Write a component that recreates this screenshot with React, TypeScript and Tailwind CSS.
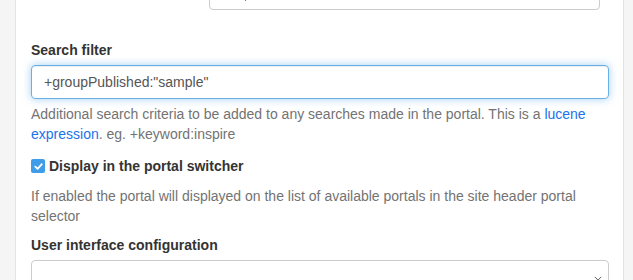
export default function App() {
  return (
    <div className="flex h-[280px] w-[633px] overflow-hidden bg-[#f5f5f5] font-['Liberation_Sans',Arial,sans-serif] text-[14px] text-[#333]">
      <div className="ml-[15px] w-[609px] shrink-0 border-x border-[#e3e3e3] bg-white px-[15px]">
        {/* previous field, cut off at the top */}
        <div className="-mt-[24px] flex justify-end pr-[8px]">
          <div className="relative h-[34px] w-[391px] rounded-[4px] border border-[#ccc] bg-white">
            <span className="absolute left-[35px] top-[20px] h-[4px] w-px bg-[#8a6a9a]" />
          </div>
        </div>

        <div className="mt-[30px]">
          <label className="block text-[14px] font-bold leading-[20px] text-[#333]">Search filter</label>
          <div className="mt-[5px] flex h-[34px] w-[578px] items-center rounded-[4px] border border-[#66afe9] px-[12px] text-[14px] text-[#555] shadow-[inset_0_1px_1px_rgba(0,0,0,0.075),0_0_8px_rgba(102,175,233,0.6)]">
            +groupPublished:"sample"
          </div>
          <p className="mt-[5px] w-[578px] text-[14px] leading-[20px] text-[#737373]">
            Additional search criteria to be added to any searches made in the portal. This is a{" "}
            <a className="text-[#1a73e8]">lucene expression</a>. eg. +keyword:inspire
          </p>
        </div>

        <div className="mt-[12px] flex items-center gap-[4px]">
          <span className="flex h-[14px] w-[14px] items-center justify-center rounded-[2px] bg-[#3e9ce8]">
            <svg viewBox="0 0 12 12" className="h-[11px] w-[11px]">
              <path d="M2.5 6.2 L5 8.6 L9.6 3.4" fill="none" stroke="white" strokeWidth="2" strokeLinecap="round" strokeLinejoin="round" />
            </svg>
          </span>
          <span className="text-[14px] font-bold leading-[20px] text-[#333]">Display in the portal switcher</span>
        </div>
        <p className="mt-[10px] w-[578px] text-[14px] leading-[20px] text-[#737373]">
          If enabled the portal will displayed on the list of available portals in the site header portal selector
        </p>

        <div className="mt-[9px]">
          <label className="block text-[14px] font-bold leading-[20px] text-[#333]">User interface configuration</label>
          <div className="relative mt-[5px] h-[34px] w-[578px] rounded-[4px] border border-[#ccc]">
            <svg viewBox="0 0 10 6" className="absolute right-[6px] top-[15px] h-[5px] w-[8px]">
              <path d="M1 1 L5 5 L9 1" fill="none" stroke="#555" strokeWidth="1.2" />
            </svg>
          </div>
        </div>
      </div>
    </div>
  );
}
